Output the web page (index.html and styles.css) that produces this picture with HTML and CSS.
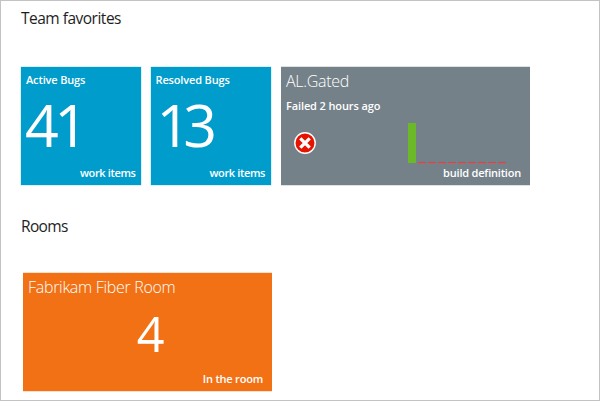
FILE: index.html
```html
<!DOCTYPE html>
<html lang="en">
<head>
<meta charset="utf-8">
<title>Team favorites</title>
<link rel="stylesheet" href="styles.css">
</head>
<body>
<main class="page">
  <h2 class="heading heading-team">Team favorites</h2>
  <section class="tiles favorites">
    <article class="tile count">
      <h3 class="label active">Active Bugs</h3>
      <div class="number">41</div>
      <div class="label footer items">work items</div>
    </article>
    <article class="tile count">
      <h3 class="label resolved">Resolved Bugs</h3>
      <div class="number shifted">13</div>
      <div class="label footer items">work items</div>
    </article>
    <article class="tile build">
      <h3 class="title gated">AL.Gated</h3>
      <div class="label failed">Failed 2 hours ago</div>
      <div class="status">
        <svg class="icon" viewBox="0 0 22 22" width="22" height="22">
          <circle cx="11" cy="11" r="10.2" fill="#e51400" stroke="#fff" stroke-width="1.4"/>
          <path d="M6.3 6.3l9.4 9.4M15.7 6.3l-9.4 9.4" stroke="#fff" stroke-width="3.3"/>
        </svg>
        <div class="chart">
          <i class="ok"></i><i></i><i></i><i></i><i></i><i></i><i></i><i></i><i></i><i></i>
        </div>
      </div>
      <div class="label footer definition">build definition</div>
    </article>
  </section>
  <h2 class="heading heading-rooms">Rooms</h2>
  <section class="tiles rooms">
    <article class="tile room">
      <h3 class="title fabrikam">Fabrikam Fiber Room</h3>
      <div class="people">4</div>
      <div class="label footer inroom">In the room</div>
    </article>
  </section>
</main>
</body>
</html>
```
FILE: styles.css
```css
* { box-sizing: border-box; margin: 0; padding: 0; }
body {
  background: #fff;
  font-family: "Open Sans", "Noto Sans", sans-serif;
}
.page {
  width: 600px;
  height: 401px;
  border: 1px solid #c3c3c3;
  padding: 6px 0 0 20px;
  overflow: hidden;
}
.heading {
  font-size: 15.5px;
  font-weight: 400;
  line-height: 22px;
  color: #1e1e1e;
  white-space: nowrap;
}
.heading-team { letter-spacing: -0.5px; }
.heading-rooms { margin-top: 30px; letter-spacing: -0.65px; }
.tiles { display: flex; }
.favorites { margin-top: 38px; gap: 9.5px; }
.rooms { margin: 36px 0 0 2px; }
.tile {
  display: flex;
  flex-direction: column;
  height: 118px;
  padding: 5px 6px 4px 5px;
  color: #fff;
  white-space: nowrap;
}
.count { width: 120px; background: #009ccc; box-shadow: 0 0 0 0.5px #b3e1f0; }
.build { width: 249px; margin-left: 1px; padding: 3px 9px 4px 5px; background: #748189; box-shadow: 0 -1px #dfe2e4, 0 1px #dfe2e4; }
.room { width: 249px; padding: 3px 9px 4px 5px; background: #f27114; box-shadow: 0 -1px #fbe0cd, 0 1px #fbe0cd; }
.label { font-size: 11px; font-weight: 600; line-height: 16px; }
.active { letter-spacing: -0.15px; }
.resolved { letter-spacing: -0.15px; }
.title { font-size: 16px; font-weight: 300; line-height: 22px; }
.gated { letter-spacing: -0.3px; }
.fabrikam { letter-spacing: -0.3px; }
.footer { margin-top: auto; align-self: flex-end; }
.items { letter-spacing: -0.37px; }
.count .items { margin-right: -0.5px; }
.definition { letter-spacing: -0.2px; }
.inroom { letter-spacing: -0.2px; }
.number {
  margin: 6px 0 0 -1px;
  font-size: 59px;
  font-weight: 400;
  line-height: 60px;
  letter-spacing: -4.5px;
}
.shifted { margin-left: 1px; letter-spacing: -7px; }
.people {
  margin: 10px 0 0 10px;
  align-self: center;
  font-size: 48.5px;
  font-weight: 400;
  line-height: 50px;
}
.failed { margin-top: 6px; letter-spacing: -0.12px; }
.status { display: flex; align-items: flex-start; margin-top: 9px; height: 40px; }
.icon { margin: 9px 0 0 8px; }
.chart { display: flex; align-items: flex-end; gap: 2px; height: 40px; margin-left: 92px; }
.chart i { width: 8px; height: 1px; background: #ff3535; }
.chart .ok { height: 40px; background: #6bb829; }
```
